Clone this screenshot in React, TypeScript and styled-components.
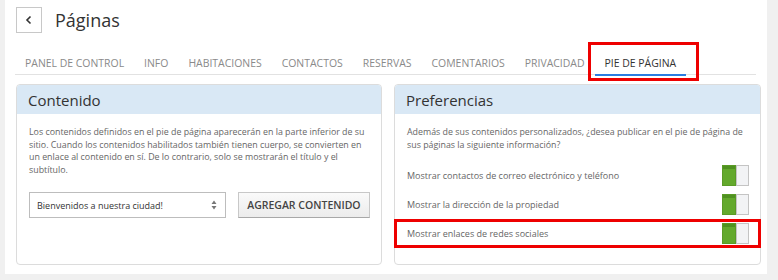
import React, { useState } from 'react';
import styled, { createGlobalStyle } from 'styled-components';

const GlobalStyle = createGlobalStyle`
  html, body {
    margin: 0;
    padding: 0;
    background: #f0f0f0;
    font-family: "Open Sans", "Liberation Sans", sans-serif;
  }
`;

const TABS = [
  'PANEL DE CONTROL',
  'INFO',
  'HABITACIONES',
  'CONTACTOS',
  'RESERVAS',
  'COMENTARIOS',
  'PRIVACIDAD',
  'PIE DE PÁGINA',
];

const PREFS = [
  { label: 'Mostrar contactos de correo electrónico y teléfono', highlight: false },
  { label: 'Mostrar la dirección de la propiedad', highlight: false },
  { label: 'Mostrar enlaces de redes sociales', highlight: true },
];

type ToggleProps = {
  on: boolean;
  onClick: () => void;
};

function Toggle({ on, onClick }: ToggleProps) {
  return (
    <Switch type="button" onClick={onClick} aria-pressed={on}>
      <SwitchHalf $on={on} $side="left" />
      <SwitchHalf $on={on} $side="right" />
    </Switch>
  );
}

export default function App() {
  const [active, setActive] = useState(7);
  const [prefs, setPrefs] = useState([true, true, true]);

  const flip = (i: number) => {
    setPrefs(prev => prev.map((v, j) => (j === i ? !v : v)));
  };

  return (
    <>
      <GlobalStyle />
      <Page>
        <Header>
          <BackButton type="button">
            <svg width="8" height="10" viewBox="0 0 8 10">
              <path d="M5.5 1.5 L2 5 L5.5 8.5" fill="none" stroke="#333" strokeWidth="1.6" />
            </svg>
          </BackButton>
          <Title>Páginas</Title>
        </Header>

        <TabList>
          {TABS.map((t, i) => (
            <Tab key={t} $active={i === active} onClick={() => setActive(i)}>
              {t}
            </Tab>
          ))}
        </TabList>

        <Cards>
          <Card>
            <CardHeader>Contenido</CardHeader>
            <CardBody>
              <Text>
                Los contenidos definidos en el pie de página aparecerán en la parte inferior de su
                sitio. Cuando los contenidos habilitados también tienen cuerpo, se convierten en
                un enlace al contenido en sí. De lo contrario, solo se mostrarán el título y el
                subtítulo.
              </Text>
              <Actions>
                <SelectBox>
                  <span>Bienvenidos a nuestra ciudad!</span>
                  <svg width="6" height="10" viewBox="0 0 6 10">
                    <path d="M3 0.5 L5.5 4 L0.5 4 Z M3 9.5 L5.5 6 L0.5 6 Z" fill="#777" />
                  </svg>
                </SelectBox>
                <AddButton type="button">AGREGAR CONTENIDO</AddButton>
              </Actions>
            </CardBody>
          </Card>

          <Card>
            <CardHeader>Preferencias</CardHeader>
            <CardBody>
              <Text>
                Además de sus contenidos personalizados, ¿desea publicar en el pie de página de
                sus páginas la siguiente información?
              </Text>
              <PrefList>
                {PREFS.map((p, i) => (
                  <PrefRow key={p.label} $highlight={p.highlight}>
                    <span>{p.label}</span>
                    <Toggle on={prefs[i]} onClick={() => flip(i)} />
                  </PrefRow>
                ))}
              </PrefList>
            </CardBody>
          </Card>
        </Cards>
      </Page>
    </>
  );
}

const Page = styled.div`
  background: #fff;
  margin: 0 11px 0 5px;
  padding: 7px 6px 9px 11px;
  height: 274px;
  box-sizing: border-box;
`;

const Header = styled.div`
  display: flex;
  align-items: center;
  gap: 13px;
  height: 26px;
`;

const BackButton = styled.button`
  width: 26px;
  height: 26px;
  box-sizing: border-box;
  border: 1px solid #c8c8c8;
  background: #fff;
  display: flex;
  align-items: center;
  justify-content: center;
  padding: 0;
  cursor: pointer;
`;

const Title = styled.h1`
  margin: 0;
  font-size: 18px;
  font-weight: 400;
  color: #333;
`;

const TabList = styled.div`
  display: flex;
  margin: 20px 5px 0 -1px;
  border-bottom: 1px solid #e2e2e2;
  height: 21px;
`;

const Tab = styled.div<{ $active: boolean }>`
  position: relative;
  padding: 0 10px;
  font-size: 10.45px;
  line-height: 20px;
  color: ${p => (p.$active ? '#333' : '#8a8a8a')};
  border-bottom: 2px solid ${p => (p.$active ? '#2b7de1' : 'transparent')};
  margin-bottom: -2px;
  cursor: pointer;
  white-space: nowrap;

  ${p =>
    p.$active &&
    `
    &::after {
      content: '';
      position: absolute;
      left: -7px;
      right: -13px;
      top: -11px;
      bottom: -7px;
      border: 3px solid #ee0000;
    }
  `}
`;

const Cards = styled.div`
  display: grid;
  grid-template-columns: 366px 367px;
  gap: 12px;
  margin-top: 9px;
`;

const Card = styled.div`
  border: 1px solid #dcdcdc;
  border-radius: 4px;
  height: 181px;
  box-sizing: border-box;
`;

const CardHeader = styled.div`
  background: #d9e8f5;
  height: 29px;
  padding: 0 11px;
  display: flex;
  align-items: center;
  font-size: 15px;
  color: #333;
  border-radius: 3px 3px 0 0;
`;

const CardBody = styled.div`
  padding: 12px 11px 12px 12px;
`;

const Text = styled.p`
  margin: 0;
  font-size: 8.85px;
  line-height: 12.5px;
  color: #666;
`;

const Actions = styled.div`
  display: flex;
  gap: 12px;
  margin-top: 16px;
`;

const SelectBox = styled.div`
  width: 198px;
  height: 26px;
  box-sizing: border-box;
  border: 1px solid #bdbdbd;
  display: flex;
  align-items: center;
  justify-content: space-between;
  padding: 0 8px 0 7px;
  font-size: 9px;
  color: #333;
`;

const AddButton = styled.button`
  width: 133px;
  height: 26px;
  box-sizing: border-box;
  border: 1px solid #c8c8c8;
  border-bottom-color: #a8a8a8;
  background: linear-gradient(#fafafa, #ececec);
  font-family: inherit;
  font-size: 10.5px;
  font-weight: 600;
  color: #444;
  padding: 0;
  cursor: pointer;
`;

const PrefList = styled.div`
  margin-top: 10px;
`;

const PrefRow = styled.div<{ $highlight: boolean }>`
  position: relative;
  display: flex;
  align-items: center;
  justify-content: space-between;
  height: 29px;
  font-size: 9px;
  color: #666;

  ${p =>
    p.$highlight &&
    `
    &::after {
      content: '';
      position: absolute;
      top: 0;
      bottom: 0;
      left: -13px;
      right: -12px;
      border: 3px solid #ee0000;
      pointer-events: none;
    }
  `}
`;

const Switch = styled.button`
  display: flex;
  width: 27px;
  height: 21px;
  padding: 0;
  border: none;
  background: none;
  cursor: pointer;
`;

const SwitchHalf = styled.span<{ $on: boolean; $side: 'left' | 'right' }>`
  flex: 1;
  box-sizing: border-box;
  ${p => {
    const filled = p.$on ? p.$side === 'left' : p.$side === 'right';
    return filled
      ? `background: linear-gradient(#4f9120 0, #4f9120 3px, #63a92c 3px); border: 1px solid #5a9b26;`
      : `background: #f2f3f5; border: 1px solid #c4c4c4;`;
  }}
`;
